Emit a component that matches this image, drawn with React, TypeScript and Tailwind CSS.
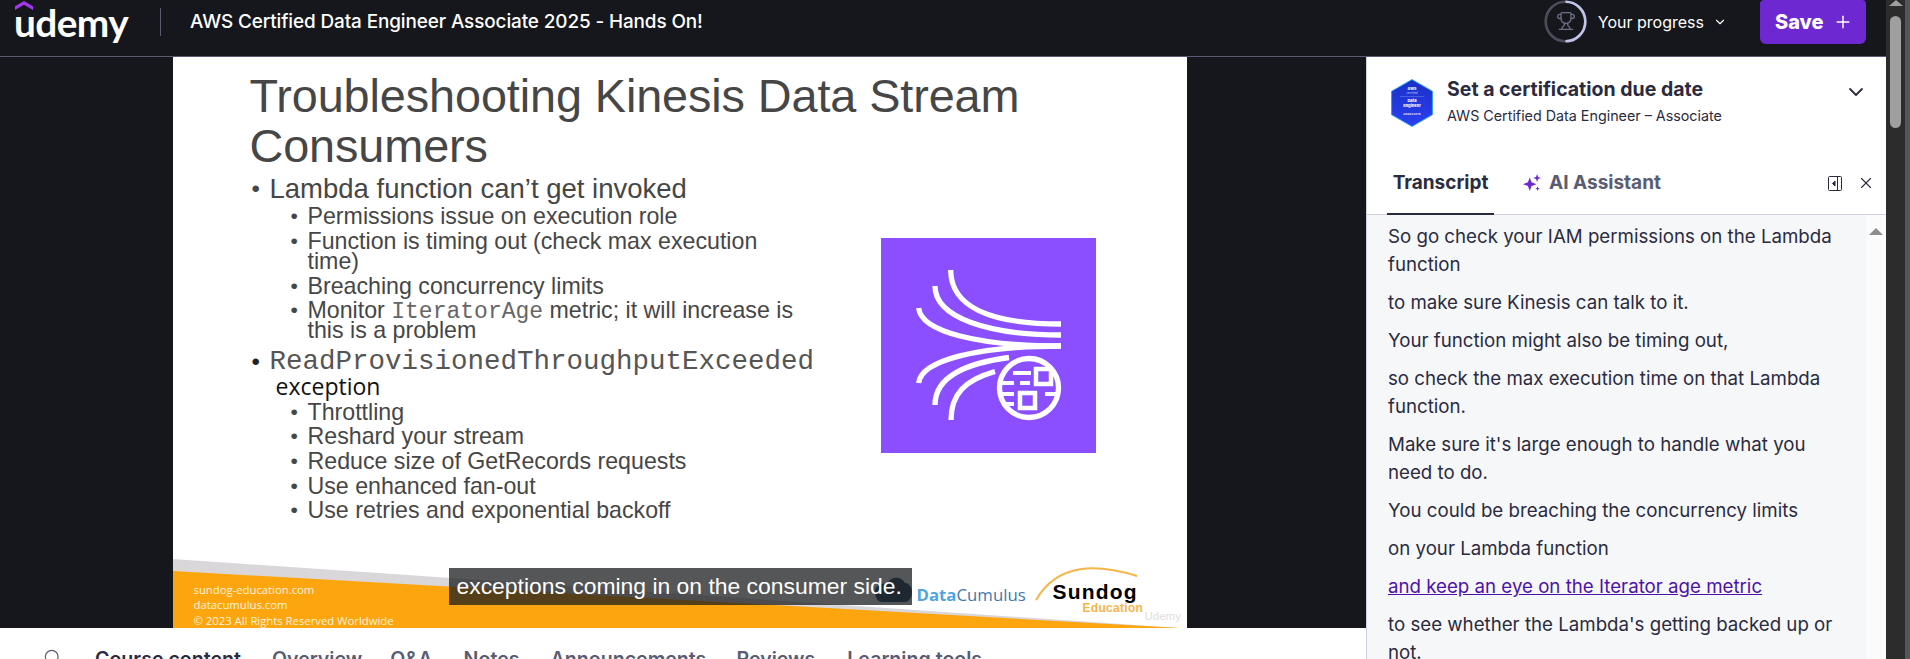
import React from "react";
import { ChevronDown, Plus, Search, Trophy, X } from "lucide-react";

const Sub = ({ children, className = "" }: { children: React.ReactNode; className?: string }) => (
  <li className={`flex text-[23.2px] leading-[20px] text-[#464646] ${className}`}>
    <span className="w-[35px] pl-[18px] text-[21px]">•</span>
    <span>{children}</span>
  </li>
);

const transcript: (string | { link: string })[] = [
  "So go check your IAM permissions on the Lambda function",
  "to make sure Kinesis can talk to it.",
  "Your function might also be timing out,",
  "so check the max execution time on that Lambda function.",
  "Make sure it's large enough to handle what you need to do.",
  "You could be breaching the concurrency limits",
  "on your Lambda function",
  { link: "and keep an eye on the Iterator age metric" },
  "to see whether the Lambda's getting backed up or not.",
];

function StreamIcon() {
  return (
    <svg viewBox="0 0 215 215" className="h-full w-full" fill="none" stroke="#fff" strokeWidth="5.3">
      <rect width="215" height="215" fill="#8c4fff" stroke="none" />
      <path d="M69.7 32C69.7 68 108 86 180 86" />
      <path d="M54 48C54 80 108 97 180 97" />
      <path d="M37.7 70C40 94 98 108 180 108" />
      <path d="M37.7 145C40 122 98 108 180 108" />
      <path d="M54 167C54 137 88 125 128 119.5" />
      <path d="M70 182C70 156 84 142 114 133.5" />
      <circle cx="148" cy="150" r="29.5" />
      <rect x="155" y="131" width="15" height="15" strokeWidth="4.5" />
      <rect x="139" y="155" width="15" height="15" strokeWidth="4.5" />
      <path d="M132 135H150M139 145H149M120 145H133M120 156H133M164 156H177M122 166H133" strokeWidth="4" />
    </svg>
  );
}

function CertBadge() {
  return (
    <svg viewBox="0 0 42 48" className="h-[48px] w-[42px] shrink-0">
      <defs>
        <linearGradient id="bd" x1="0" y1="0" x2="0" y2="1">
          <stop offset="0" stopColor="#1a2fc4" />
          <stop offset="1" stopColor="#2a40f0" />
        </linearGradient>
      </defs>
      <path d="M21 .6 41.4 12.3V35.7L21 47.4.6 35.7V12.3Z" fill="url(#bd)" stroke="#2f9bf0" strokeWidth="1" />
      <g textAnchor="middle" fontFamily="Inter, sans-serif" fill="#fff">
        <text x="21" y="10.5" fontSize="4.5" fontWeight="700">aws</text>
        <text x="21" y="15" fontSize="2.8" fill="#c9d0ff">certified</text>
        <text x="21" y="23" fontSize="4" fontWeight="800">Data</text>
        <text x="21" y="28" fontSize="4" fontWeight="800">Engineer</text>
        <text x="21" y="36" fontSize="2.6" fontWeight="700" letterSpacing=".3">ASSOCIATE</text>
      </g>
      <path d="M9 17.5H33" stroke="#8ea0ff" strokeWidth=".4" />
    </svg>
  );
}

export default function App() {
  return (
    <div className="flex h-[659px] w-[1910px] overflow-hidden bg-[#16171c] font-['Inter',sans-serif]">
      <div className="flex h-full w-[1886px] flex-col">
        <header className="flex h-[57px] shrink-0 items-start border-b border-[#595c73] bg-[#16171c] text-white">
          <div className="flex h-[44px] w-[1886px] items-center">
            <div className="relative ml-[15px] h-[44px] w-[113px]">
              <svg viewBox="0 0 18 9" className="absolute left-0 top-[1px] h-[9px] w-[18px]">
                <path d="M9 0 18 5.2V9L9 3.8 0 9V5.2Z" fill="#a435f0" />
              </svg>
              <span className="absolute left-[-1px] top-[2px] font-['Lato',sans-serif] text-[38.8px] font-bold leading-[40px] tracking-[-0.6px] text-white">
                udemy
              </span>
            </div>
            <div className="ml-[32px] h-[28px] w-px bg-[#595c73]" />
            <div className="ml-[29px] text-[18.9px] font-medium tracking-[-0.1px]">
              AWS Certified Data Engineer Associate 2025 - Hands On!
            </div>
            <div className="ml-auto flex h-[43px] items-center self-start">
              <div className="relative h-[43px] w-[43px]">
                <svg viewBox="0 0 43 43" className="h-full w-full" fill="none" strokeWidth="2.6">
                  <circle cx="21.5" cy="21.5" r="19.8" stroke="#4b4d5c" />
                  <path d="M21.5 1.7A19.8 19.8 0 0 1 21.5 41.3" stroke="#c0c4e8" />
                </svg>
                <Trophy size={20} strokeWidth={1.6} className="absolute left-[12px] top-[11px] text-[#6a6d85]" />
              </div>
              <span className="ml-[11px] text-[16px]">Your progress</span>
              <ChevronDown size={14} className="ml-[9px]" />
              <button className="ml-[33px] flex h-[44px] w-[106px] items-center rounded-b-[6px] rounded-t-[4px] bg-[#6d28d2] pl-[15px] text-[20px] font-extrabold text-white">
                Save
                <Plus size={20} strokeWidth={1.7} className="ml-[9px]" />
              </button>
              <div className="w-[20px]" />
            </div>
          </div>
        </header>

        <div className="flex min-h-0 flex-1">
          <div className="flex w-[1366px] flex-col">
            <div className="flex h-[571px] shrink-0 justify-center bg-[#16171c] pr-[6px]">
              <div className="relative ml-[-1px] h-[571px] w-[1014px] overflow-hidden bg-white font-['Liberation_Sans',sans-serif]">
                <h1 className="pl-[77px] pt-[14px] text-[46.8px] font-normal leading-[50px] tracking-[-0.1px] text-[#464646]">
                  Troubleshooting Kinesis Data Stream
                  <br />
                  Consumers
                </h1>
                <ul>
                  <li className="mt-[5px] flex pl-[77px] text-[27.5px] leading-[26px] text-[#464646]">
                    <span className="ml-[2px] w-[18px] text-[24px]">•</span>
                    <span>Lambda function can’t get invoked</span>
                  </li>
                </ul>
                <ul className="pl-[100px]">
                  <Sub className="mt-[4px]">Permissions issue on execution role</Sub>
                  <Sub className="mt-[5px]">
                    Function is timing out (check max execution
                    <br />
                    time)
                  </Sub>
                  <Sub className="mt-[5px]">Breaching concurrency limits</Sub>
                  <Sub className="mt-[4px]">
                    Monitor <span className="font-['Liberation_Mono',monospace] text-[23px] leading-[0] text-[#666666]">IteratorAge</span> metric; it will increase is
                    <br />
                    this is a problem
                  </Sub>
                </ul>
                <div className="mt-[8px] flex pl-[77px] leading-[28px] text-[#464646]">
                  <span className="ml-[2px] w-[18px] text-[24px] text-[#222]">•</span>
                  <span className="font-['Liberation_Mono',monospace] text-[27.5px] text-[#555555]">ReadProvisionedThroughputExceeded</span>
                </div>
                <div className="pl-[103px] font-['Open_Sans',sans-serif] text-[23px] leading-[20px] text-[#111]">exception</div>
                <ul className="pl-[100px]">
                  <Sub className="mt-[6px]">Throttling</Sub>
                  <Sub className="mt-[4px]">Reshard your stream</Sub>
                  <Sub className="mt-[5px]">Reduce size of GetRecords requests</Sub>
                  <Sub className="mt-[5px]">Use enhanced fan-out</Sub>
                  <Sub className="mt-[4px]">Use retries and exponential backoff</Sub>
                </ul>

                <div className="absolute left-[708px] top-[181px] h-[215px] w-[215px]">
                  <StreamIcon />
                </div>

                <svg viewBox="0 0 1014 571" className="absolute inset-0 h-full w-full">
                  <polygon points="0,502 1006,571 0,571" fill="#d9d7da" />
                  <polygon points="0,514 1007,571 0,571" fill="#fca50f" />
                  <path d="M702 535c0-6 6-10 12-8 4-8 14-8 18-1 3 0 7 3 7 9 0 7-4 10-8 10h-22c-4 0-7-5-7-10Z" fill="#22476f" />
                  <path d="M863 543C885 505 925 507 964 519" fill="none" stroke="#f6b548" strokeWidth="2" />
                </svg>

                <div className="absolute bottom-[0px] left-[21px] font-['Open_Sans',sans-serif] text-[11.3px] leading-[15.5px] text-[#fff4dc]">
                  <div>sundog-education.com</div>
                  <div>datacumulus.com</div>
                  <div>© 2023 All Rights Reserved Worldwide</div>
                </div>

                <div className="absolute left-[744px] top-[528px] font-['Open_Sans',sans-serif] text-[16.8px] leading-[20px]">
                  <span className="font-bold text-[#4fa6e0]">Data</span>
                  <span className="text-[#3f78b0]">Cumulus</span>
                </div>
                <div className="absolute left-[880px] top-[522px] text-[21px] font-bold leading-[26px] tracking-[1.2px] text-black">Sundog</div>
                <div className="absolute left-[910px] top-[544px] text-[12px] font-bold leading-[14px] tracking-[0.3px] text-[#f6b548]">Education</div>
                <div className="absolute left-[972px] top-[552px] text-[11.5px] leading-[14px] text-[#dddddd]">Udemy</div>

                <div className="absolute left-[276px] top-[511px] flex h-[37px] w-[463px] items-center whitespace-nowrap bg-[#1c1d1fbf] pl-[8px] text-[22.9px] text-white">
                  exceptions coming in on the consumer side.
                </div>
              </div>
            </div>
            <nav className="flex h-[31px] shrink-0 items-start bg-white pl-[43px] pt-[19px] text-[#595c73] text-[19.6px] font-semibold leading-[24px]">
              <Search size={19} strokeWidth={1.5} className="mt-[1px] text-[#595c73]" />
              <span className="ml-[33px] text-[#2a2b3f]">Course content</span>
              <span className="ml-[31px]">Overview</span>
              <span className="ml-[28px]">Q&amp;A</span>
              <span className="ml-[31px]">Notes</span>
              <span className="ml-[31px]">Announcements</span>
              <span className="ml-[30px]">Reviews</span>
              <span className="ml-[32px]">Learning tools</span>
            </nav>
          </div>

          <aside className="flex h-[602px] w-[520px] flex-col border-l border-[#d1d2e0] bg-white text-[#2a2b3f]">
            <div className="flex h-[100px] shrink-0 items-start pl-[24px] pt-[22px]">
              <CertBadge />
              <div className="ml-[14px] mt-[-2px]">
                <div className="text-[19.5px] font-bold leading-[24px]">Set a certification due date</div>
                <div className="mt-[5px] text-[14.3px] leading-[20px]">AWS Certified Data Engineer – Associate</div>
              </div>
              <ChevronDown size={24} strokeWidth={1.8} className="ml-auto mr-[18px] mt-[1px]" />
            </div>
            <div className="flex h-[58px] shrink-0 border-b border-[#d1d2e0] pl-[20px] text-[19px] font-bold">
              <div className="mb-[-1px] flex h-[58px] w-[107px] items-start justify-center border-b-2 border-[#2a2b3f] pt-[14px] leading-[24px]">Transcript</div>
              <div className="ml-[29px] flex items-start pt-[14px] leading-[24px] text-[#595c73]">
                <svg viewBox="0 0 16 16" className="mt-[3px] h-[18px] w-[18px]" fill="#6d28d2">
                  <path d="M6 3 7.6 7.4 12 9 7.6 10.6 6 15 4.4 10.6 0 9 4.4 7.4Z" />
                  <path d="M12.5 0 13.4 2.6 16 3.5 13.4 4.4 12.5 7 11.6 4.4 9 3.5 11.6 2.6Z" />
                  <path d="M13 11 13.6 12.4 15 13 13.6 13.6 13 15 12.4 13.6 11 13 12.4 12.4Z" />
                </svg>
                <span className="ml-[8px]">AI Assistant</span>
              </div>
              <div className="ml-auto mr-[11px] mt-[17px] flex items-center gap-[15px] self-start">
                <svg viewBox="0 0 14 15" className="h-[15px] w-[14px]" fill="none" stroke="#2a2b3f" strokeWidth="1">
                  <rect x=".5" y=".5" width="13" height="14" rx="1" />
                  <path d="M9.5 .5V14.5" />
                  <path d="M7 5V10L4.5 7.5Z" fill="#2a2b3f" />
                </svg>
                <X size={18} strokeWidth={1.5} />
              </div>
            </div>
            <div className="flex min-h-0 flex-1">
              <div className="w-[499px] overflow-hidden bg-[#f6f7f9] pl-[21px] pr-[27px] pt-[8px] text-[18.7px] leading-[28px]">
                {transcript.map((t, i) =>
                  typeof t === "string" ? (
                    <p key={i} className="mb-[10px]">{t}</p>
                  ) : (
                    <p key={i} className="mb-[10px] text-[#4d13a8] underline">{t.link}</p>
                  )
                )}
              </div>
              <div className="flex w-[20px] justify-center bg-[#fbfbfb] pt-[13px]">
                <div className="h-0 w-0 border-x-[7px] border-b-[7px] border-x-transparent border-b-[#8d8d8d]" />
              </div>
            </div>
          </aside>
        </div>
      </div>

      <div className="flex h-full w-[19px] flex-col items-center bg-[#2c2c2c]">
        <div className="mt-0 h-0 w-0 border-x-[7px] border-b-[6px] border-x-transparent border-b-[#9f9f9f]" />
        <div className="mt-[10px] h-[112px] w-[11px] rounded-full bg-[#9f9f9f]" />
      </div>
      <div className="h-full w-[5px] bg-[#55565b]" />
    </div>
  );
}
